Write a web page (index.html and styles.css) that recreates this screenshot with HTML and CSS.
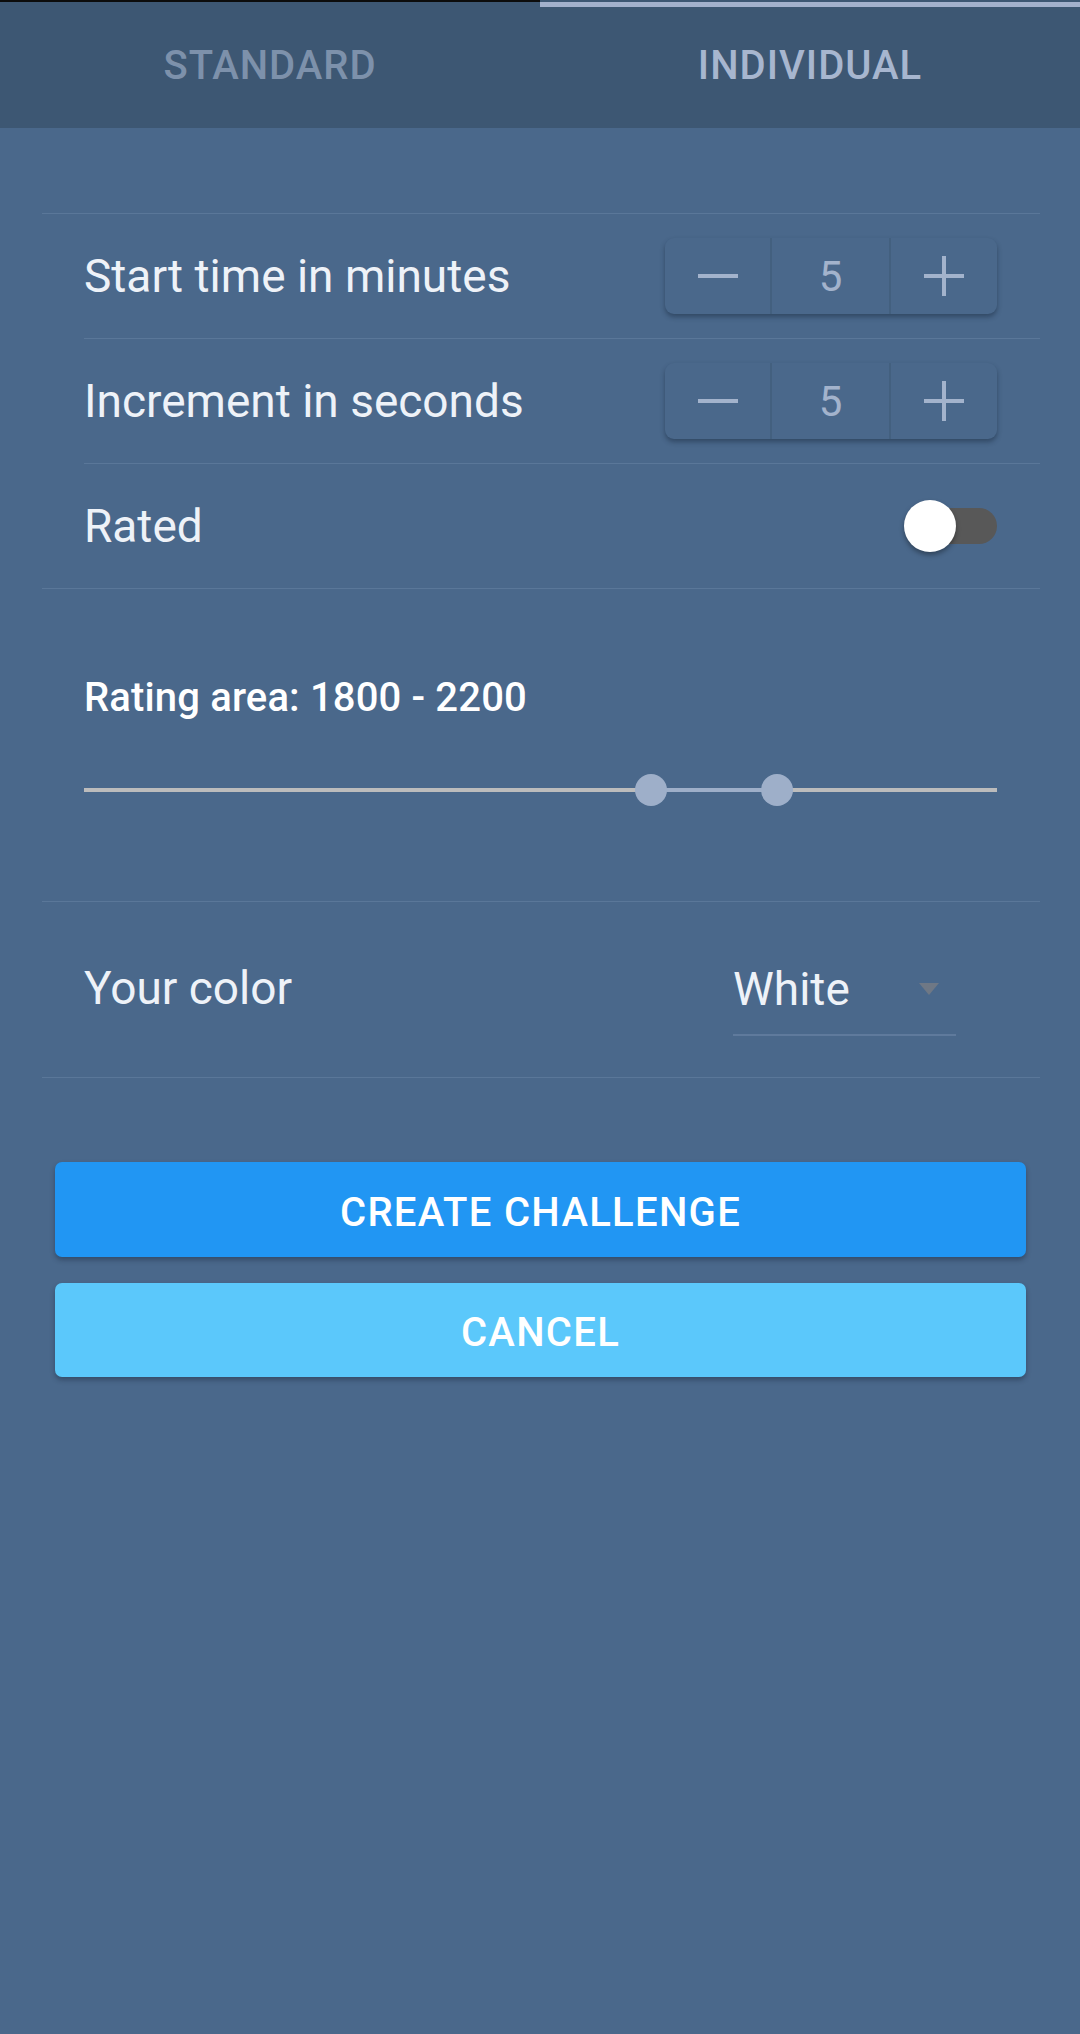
FILE: index.html
```html
<!DOCTYPE html>
<html lang="en">
<head>
  <meta charset="UTF-8" />
  <meta name="viewport" content="width=device-width, initial-scale=1.0"/>
  <title>Create challenge</title>
  <link rel="stylesheet" href="styles.css">
</head>
<body>
  <div class="tabs">
    <div class="tab">STANDARD</div>
    <div class="tab active">INDIVIDUAL</div>
  </div>

  <div class="content">
    <div class="group">
      <div class="row">
        <span class="label">Start time in minutes</span>
        <div class="stepper">
          <div class="step minus"><svg width="40" height="40" viewBox="0 0 40 40"><path d="M0 20H40" /></svg></div>
          <div class="step value">5</div>
          <div class="step plus"><svg width="40" height="40" viewBox="0 0 40 40"><path d="M0 20H40M20 0V40" /></svg></div>
        </div>
      </div>
      <div class="row">
        <span class="label">Increment in seconds</span>
        <div class="stepper">
          <div class="step minus"><svg width="40" height="40" viewBox="0 0 40 40"><path d="M0 20H40" /></svg></div>
          <div class="step value">5</div>
          <div class="step plus"><svg width="40" height="40" viewBox="0 0 40 40"><path d="M0 20H40M20 0V40" /></svg></div>
        </div>
      </div>
      <div class="row">
        <span class="label">Rated</span>
        <div class="switch">
          <div class="switch-track"></div>
          <div class="switch-thumb"></div>
        </div>
      </div>
    </div>

    <div class="rating">
      <div class="rating-title">Rating area: 1800 - 2200</div>
      <div class="slider">
        <div class="slider-track"></div>
        <div class="slider-range" style="left: 62.1%; width: 13.75%;"></div>
        <div class="slider-thumb" style="left: 62.1%;"></div>
        <div class="slider-thumb" style="left: 75.85%;"></div>
      </div>
    </div>

    <div class="color-row">
      <span class="label">Your color</span>
      <div class="dropdown">
        <span>White</span>
        <span class="caret"></span>
      </div>
    </div>

    <div class="actions">
      <button class="btn primary">CREATE CHALLENGE</button>
      <button class="btn secondary">CANCEL</button>
    </div>
  </div>
</body>
</html>
```

FILE: styles.css
```css
body {
  margin: 0;
  padding: 0;
  font-family: Roboto, 'Noto Sans', sans-serif;
  background: #4a688b;
  min-height: 2034px;
}
.tabs {
  display: flex;
  height: 128px;
  background: #3d5773;
}
.tab {
  flex: 1;
  position: relative;
  display: flex;
  align-items: center;
  justify-content: center;
  font-size: 40px;
  font-weight: 500;
  letter-spacing: 1px;
  color: #7d91ab;
  border-top: 2px solid #0c0c0c;
  box-sizing: border-box;
}
.tab.active {
  color: #a7b6cf;
  border-top-color: #3d5773;
}
.tab.active::before {
  content: "";
  position: absolute;
  top: 0;
  left: 0;
  right: 0;
  height: 5px;
  background: #a3b1cc;
}
.content {
  padding: 85px 40px 0 42px;
}
.group {
  border-top: 1px solid #5a7799;
  border-bottom: 1px solid #5a7799;
}
.row {
  margin-left: 42px;
  padding-right: 43px;
  height: 124px;
  display: flex;
  align-items: center;
  justify-content: space-between;
}
.row + .row {
  border-top: 1px solid #5a7799;
}
.label {
  font-size: 46px;
  color: #eef2f8;
}
.stepper {
  display: flex;
  height: 76px;
  border-radius: 9px;
  background: #4a688b;
  box-shadow: 0 3px 5px rgba(20, 35, 55, 0.45);
}
.step {
  display: flex;
  align-items: center;
  justify-content: center;
}
.step svg {
  stroke: #a3b3cc;
  stroke-width: 4;
}
.minus {
  width: 105px;
}
.value {
  width: 117px;
  border-left: 2px solid #43607f;
  border-right: 2px solid #43607f;
  font-size: 42px;
  color: #a3b3cc;
}
.plus {
  width: 106px;
}
.switch {
  position: relative;
  width: 93px;
  height: 52px;
}
.switch-track {
  position: absolute;
  right: 0;
  top: 8px;
  width: 89px;
  height: 36px;
  border-radius: 18px;
  background: #585858;
}
.switch-thumb {
  position: absolute;
  left: 0;
  top: 0;
  width: 52px;
  height: 52px;
  border-radius: 50%;
  background: #ffffff;
  box-shadow: 0 3px 5px rgba(0, 0, 0, 0.35);
}
.rating {
  padding: 85px 43px 95px 42px;
}
.rating-title {
  font-size: 40px;
  line-height: 48px;
  font-weight: 500;
  letter-spacing: 0.15px;
  color: #ffffff;
}
.slider {
  position: relative;
  height: 32px;
  margin-top: 52px;
}
.slider-track {
  position: absolute;
  left: 0;
  right: 0;
  top: 14px;
  height: 4px;
  background: #bcbcbc;
}
.slider-range {
  position: absolute;
  top: 14px;
  height: 4px;
  background: #9eafc9;
}
.slider-thumb {
  position: absolute;
  top: 0;
  width: 32px;
  height: 32px;
  margin-left: -16px;
  border-radius: 50%;
  background: #9eafc9;
}
.color-row {
  height: 171px;
  border-top: 1px solid #5a7799;
  border-bottom: 1px solid #5a7799;
  padding: 0 84px 4px 42px;
  display: flex;
  align-items: center;
  justify-content: space-between;
}
.dropdown {
  width: 206px;
  height: 90px;
  margin-top: 4px;
  border-bottom: 2px solid #5f7a9c;
  display: flex;
  align-items: center;
  justify-content: space-between;
  padding-right: 17px;
  font-size: 46px;
  color: #eef2f8;
}
.caret {
  width: 0;
  height: 0;
  border-left: 10px solid transparent;
  border-right: 10px solid transparent;
  border-top: 12px solid #6f7885;
}
.actions {
  padding: 84px 14px 0 13px;
  display: flex;
  flex-direction: column;
  gap: 26px;
}
.btn {
  height: 95px;
  padding-top: 6px;
  border: none;
  border-radius: 7px;
  font-family: Roboto, 'Noto Sans', sans-serif;
  font-size: 40px;
  font-weight: 500;
  letter-spacing: 1.3px;
  color: #ffffff;
  box-shadow: 0 3px 5px rgba(20, 35, 55, 0.4);
}
.primary {
  background: #2196f3;
}
.secondary {
  background: #5bc8fb;
  height: 94px;
}
```
